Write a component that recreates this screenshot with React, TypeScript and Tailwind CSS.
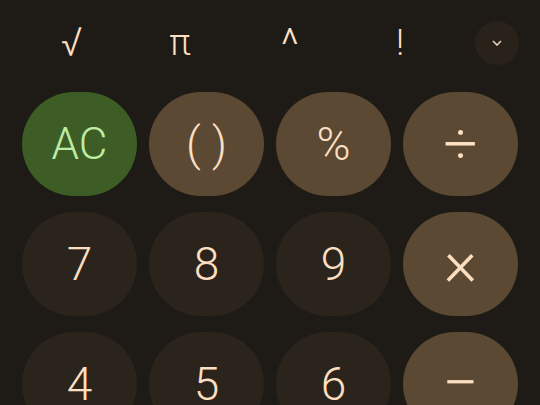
import { ReactNode } from 'react';

type Kind = 'clear' | 'op' | 'num';

const keys: { label: ReactNode; kind: Kind; size?: string }[] = [
  { label: 'AC', kind: 'clear', size: 'text-[44px]' },
  { label: '( )', kind: 'op' },
  { label: '%', kind: 'op' },
  { label: '÷', kind: 'op', size: 'text-[60px]' },
  { label: '7', kind: 'num' },
  { label: '8', kind: 'num' },
  { label: '9', kind: 'num' },
  { label: '×', kind: 'op', size: 'text-[64px]' },
  { label: '4', kind: 'num' },
  { label: '5', kind: 'num' },
  { label: '6', kind: 'num' },
  { label: '−', kind: 'op', size: 'text-[64px]' },
];

const kindClass: Record<Kind, string> = {
  clear: 'bg-[#3d5c26] text-[#bdeda3]',
  op: 'bg-[#5c4933] text-[#fbdfc0]',
  num: 'bg-[#2b241c] text-[#fbdfc0]',
};

export default function App() {
  return (
    <div className="w-[540px] h-[405px] overflow-hidden bg-[#1e1b16] font-['Roboto',sans-serif] font-light">
      <div className="flex items-center h-[86px] pl-[15px] text-[#fbdfc0]">
        <div className="w-[110px] flex justify-center text-[40px] pl-1">√</div>
        <div className="w-[110px] flex justify-center text-[36px]">π</div>
        <div className="w-[110px] flex justify-center text-[44px] mt-1">^</div>
        <div className="w-[110px] flex justify-center text-[36px]">!</div>
        <div className="ml-5 w-11 h-11 rounded-full bg-[#29221b] flex items-center justify-center">
          <svg width="10" height="6" viewBox="0 0 10 6" fill="none">
            <path d="M1 1l4 4 4-4" stroke="#e8d2b6" strokeWidth="1.6" />
          </svg>
        </div>
      </div>
      <div className="grid grid-cols-4 gap-x-3 gap-y-4 px-[22px] mt-[6px]">
        {keys.map((k, i) => (
          <div
            key={i}
            className={`h-[104px] rounded-full flex items-center justify-center ${k.size ?? 'text-[46px]'} ${kindClass[k.kind]}`}
          >
            {k.label}
          </div>
        ))}
      </div>
    </div>
  );
}
